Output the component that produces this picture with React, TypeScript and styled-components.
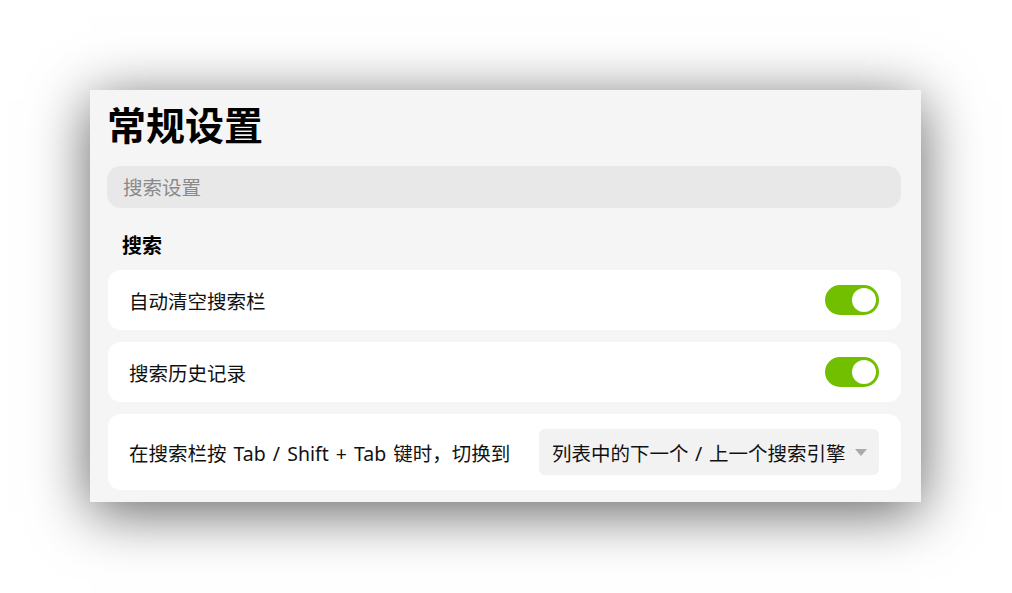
import React from "react";
import styled, { createGlobalStyle } from "styled-components";

const GlobalStyle = createGlobalStyle`
  html, body {
    margin: 0;
    padding: 0;
    background: #ffffff;
  }
  body {
    font-family: "Noto Sans", "Noto Sans CJK SC", sans-serif;
    color: #111;
  }
`;

const Page = styled.div`
  width: 1012px;
  height: 593px;
  padding: 90px 0 0 90px;
  box-sizing: border-box;
  overflow: hidden;
`;

const Panel = styled.div`
  width: 831px;
  height: 412px;
  box-sizing: border-box;
  padding: 11px 20px 12px 17px;
  background: #f5f5f5;
  box-shadow: 0 10px 55px rgba(0, 0, 0, 0.62);
  display: flex;
  flex-direction: column;
`;

const Title = styled.h1`
  margin: 0;
  font-size: 39px;
  line-height: 47px;
  font-weight: 700;
  color: #000;
`;

const SearchInput = styled.input`
  margin-top: 18px;
  height: 42px;
  box-sizing: border-box;
  border: none;
  outline: none;
  border-radius: 14px;
  background: #e8e8e8;
  padding: 0 16px;
  font-family: inherit;
  font-size: 19.5px;
  color: #333;

  &::placeholder {
    color: #8a8a8a;
  }
`;

const SectionLabel = styled.div`
  margin: 24px 0 10px 15px;
  font-size: 20px;
  line-height: 28px;
  font-weight: 700;
  color: #000;
`;

const CardList = styled.div`
  display: flex;
  flex-direction: column;
  gap: 12px;
  padding-left: 1px;
`;

const Card = styled.div<{ $tall?: boolean }>`
  height: ${(p) => (p.$tall ? 76 : 60)}px;
  box-sizing: border-box;
  padding: 0 22px 0 21px;
  background: #ffffff;
  border-radius: 13px;
  display: flex;
  align-items: center;
  justify-content: space-between;
`;

const Label = styled.span`
  font-size: 19.5px;
  word-spacing: 2px;
  color: #111;
  white-space: nowrap;
`;

const Track = styled.div<{ $on: boolean }>`
  width: 54px;
  height: 30px;
  box-sizing: border-box;
  border-radius: 15px;
  background: ${(p) => (p.$on ? "#72bf00" : "#ccc")};
  display: flex;
  align-items: center;
  justify-content: ${(p) => (p.$on ? "flex-end" : "flex-start")};
  padding: 0 3px;
`;

const Knob = styled.div`
  width: 24px;
  height: 24px;
  border-radius: 50%;
  background: #fff;
`;

const Select = styled.div`
  width: 340px;
  height: 46px;
  box-sizing: border-box;
  padding: 0 12px 0 13px;
  background: #f2f2f2;
  border-radius: 6px;
  display: flex;
  align-items: center;
  justify-content: space-between;
  font-size: 19.5px;
  word-spacing: 1.5px;
  color: #111;
  white-space: nowrap;
`;

const Toggle: React.FC<{ on: boolean }> = ({ on }) => (
  <Track $on={on}>
    <Knob />
  </Track>
);

const App: React.FC = () => {
  return (
    <>
      <GlobalStyle />
      <Page>
        <Panel>
          <Title>常规设置</Title>
          <SearchInput placeholder="搜索设置" />
          <SectionLabel>搜索</SectionLabel>
          <CardList>
            <Card>
              <Label>自动清空搜索栏</Label>
              <Toggle on />
            </Card>
            <Card>
              <Label>搜索历史记录</Label>
              <Toggle on />
            </Card>
            <Card $tall>
              <Label>在搜索栏按 Tab / Shift + Tab 键时，切换到</Label>
              <Select>
                <span>列表中的下一个 / 上一个搜索引擎</span>
                <svg width="12" height="7" viewBox="0 0 12 7">
                  <path d="M0 0 L12 0 L6 7 Z" fill="#aaaaaa" />
                </svg>
              </Select>
            </Card>
          </CardList>
        </Panel>
      </Page>
    </>
  );
};

export default App;
